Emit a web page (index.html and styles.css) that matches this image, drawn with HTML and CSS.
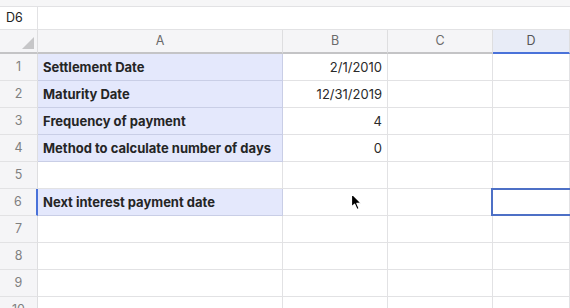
FILE: index.html
```html
<!DOCTYPE html>
<html>

<head>
    <title>Sheet</title>
    <link rel="stylesheet" href="styles.css">
</head>

<body>
    <div class="top-strip"></div>

    <div class="formula-bar">
        <div class="name-box">D6</div>
        <div class="formula-input"></div>
    </div>

    <div class="sheet">
        <div class="corner"><span class="corner-mark"></span></div>
        <div class="col-head">A</div>
        <div class="col-head">B</div>
        <div class="col-head">C</div>
        <div class="col-head active">D</div>

        <div class="row-head">1</div>
        <div class="cell label">Settlement Date</div>
        <div class="cell num">2/1/2010</div>
        <div class="cell"></div>
        <div class="cell"></div>

        <div class="row-head">2</div>
        <div class="cell label">Maturity Date</div>
        <div class="cell num">12/31/2019</div>
        <div class="cell"></div>
        <div class="cell"></div>

        <div class="row-head">3</div>
        <div class="cell label">Frequency of payment</div>
        <div class="cell num">4</div>
        <div class="cell"></div>
        <div class="cell"></div>

        <div class="row-head">4</div>
        <div class="cell label">Method to calculate number of days</div>
        <div class="cell num">0</div>
        <div class="cell"></div>
        <div class="cell"></div>

        <div class="row-head">5</div>
        <div class="cell"></div>
        <div class="cell"></div>
        <div class="cell"></div>
        <div class="cell"></div>

        <div class="row-head active">6</div>
        <div class="cell label">Next interest payment date</div>
        <div class="cell"></div>
        <div class="cell"></div>
        <div class="cell selected"></div>

        <div class="row-head">7</div>
        <div class="cell"></div>
        <div class="cell"></div>
        <div class="cell"></div>
        <div class="cell"></div>

        <div class="row-head">8</div>
        <div class="cell"></div>
        <div class="cell"></div>
        <div class="cell"></div>
        <div class="cell"></div>

        <div class="row-head">9</div>
        <div class="cell"></div>
        <div class="cell"></div>
        <div class="cell"></div>
        <div class="cell"></div>

        <div class="row-head">10</div>
        <div class="cell"></div>
        <div class="cell"></div>
        <div class="cell"></div>
        <div class="cell"></div>
    </div>

    <!-- mouse pointer -->
    <svg class="pointer" width="14" height="20" viewBox="0 0 14 20">
        <path d="M1.5 1.5 L1.5 15 L4.6 12.2 L7 17.6 L9.2 16.6 L6.9 11.4 L11 11.2 Z" fill="#000" stroke="#fff" stroke-width="1.2" stroke-linejoin="round" />
    </svg>
</body>

</html>
```

FILE: styles.css
```css
* {
    margin: 0;
    padding: 0;
    box-sizing: border-box;
}

body {
    width: 570px;
    height: 308px;
    overflow: hidden;
    position: relative;
    background: #fff;
    font-family: Inter, "Liberation Sans", sans-serif;
    color: #222;
}

.top-strip {
    height: 7px;
    background: #f6f6f7;
    border-bottom: 1px solid #e2e2e4;
}

.formula-bar {
    display: flex;
    height: 23px;
    border-bottom: 1px solid #e2e2e4;
}

.name-box {
    width: 38px;
    border-right: 1px solid #e2e2e4;
    padding-left: 6px;
    font-size: 12.5px;
    line-height: 22px;
    color: #222;
}

.formula-input {
    flex: 1;
}

.sheet {
    display: grid;
    grid-template-columns: 38px 245px 105px 105px 1fr;
    grid-template-rows: 24px;
    grid-auto-rows: 27px;
}

.corner,
.col-head,
.row-head {
    background: #f5f5f7;
    border-right: 1px solid #dedee0;
    color: #6a6a6a;
    font-size: 12.5px;
    text-align: center;
}

.corner,
.col-head {
    border-bottom: 2px solid #c4c4c6;
    line-height: 22px;
}

.corner {
    display: flex;
    justify-content: flex-end;
    align-items: flex-end;
    padding: 0 3px 3px 0;
}

.corner-mark {
    width: 0;
    height: 0;
    border-left: 12px solid transparent;
    border-bottom: 12px solid #c6c6c8;
}

.col-head.active {
    background: #e8ecf7;
    border-bottom-color: #4a72d9;
    color: #555;
}

.row-head {
    border-bottom: 1px solid #e2e2e4;
    line-height: 26px;
    color: #808080;
}

.row-head.active {
    border-right: 2px solid #4a72d9;
}

.cell {
    border-right: 1px solid #e2e2e4;
    border-bottom: 1px solid #e2e2e4;
    font-size: 13px;
    line-height: 26px;
    padding: 0 5px;
    white-space: nowrap;
    overflow: hidden;
}

.cell.label {
    background: #e4e8fc;
    border-color: #c9cee6;
    font-weight: 700;
    color: #252525;
}

.cell.num {
    text-align: right;
    color: #2a2a2a;
}

.cell.selected {
    position: relative;
    overflow: visible;
}

.cell.selected::after {
    content: "";
    position: absolute;
    top: -1px;
    left: -2px;
    right: -12px;
    bottom: -1px;
    border: 2px solid #4d70c6;
}

.pointer {
    position: absolute;
    left: 350px;
    top: 192px;
}
```
